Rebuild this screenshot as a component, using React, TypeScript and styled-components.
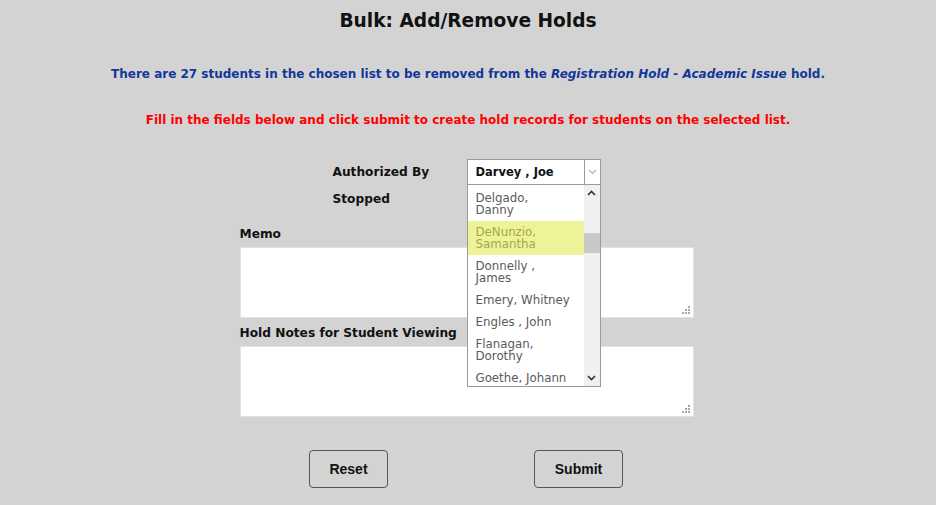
import styled, { createGlobalStyle } from 'styled-components';

const GlobalStyle = createGlobalStyle`
  html, body {
    margin: 0;
    padding: 0;
    background: #d3d3d3;
  }
  body {
    font-family: "DejaVu Sans", "Liberation Sans", sans-serif;
  }
`;

const staff = [
  { lines: ['Delgado,', 'Danny'] },
  { lines: ['DeNunzio,', 'Samantha'], active: true },
  { lines: ['Donnelly ,', 'James'] },
  { lines: ['Emery, Whitney'] },
  { lines: ['Engles , John'] },
  { lines: ['Flanagan,', 'Dorothy'] },
  { lines: ['Goethe, Johann'] },
];

function Grip() {
  return (
    <GripIcon width="9" height="9" viewBox="0 0 9 9">
      <rect x="6" y="0" width="2" height="2" />
      <rect x="3" y="3" width="2" height="2" />
      <rect x="6" y="3" width="2" height="2" />
      <rect x="0" y="6" width="2" height="2" />
      <rect x="3" y="6" width="2" height="2" />
      <rect x="6" y="6" width="2" height="2" />
    </GripIcon>
  );
}

export default function App() {
  return (
    <Page>
      <GlobalStyle />
      <Title>Bulk: Add/Remove Holds</Title>
      <Info>
        There are 27 students in the chosen list to be removed from the{' '}
        <em>Registration Hold - Academic Issue</em> hold.
      </Info>
      <Warning>
        Fill in the fields below and click submit to create hold records for
        students on the selected list.
      </Warning>

      <Form>
        <FieldRow>
          <Label>Authorized By</Label>
          <SelectWrap>
            <SelectBox>
              <SelectValue>Darvey , Joe</SelectValue>
              <SelectArrow>
                <svg width="9" height="6" viewBox="0 0 9 6">
                  <path d="M1 1l3.5 3.5L8 1" fill="none" stroke="#b0b0b0" strokeWidth="1.2" />
                </svg>
              </SelectArrow>
            </SelectBox>
            <Dropdown>
              <Options>
                {staff.map((s) => (
                  <Option key={s.lines.join(' ')} $active={!!s.active}>
                    {s.lines.map((l) => (
                      <span key={l}>{l}</span>
                    ))}
                  </Option>
                ))}
              </Options>
              <Scrollbar>
                <ScrollBtn>
                  <svg width="9" height="6" viewBox="0 0 9 6">
                    <path d="M1 5l3.5-3.5L8 5" fill="none" stroke="#333" strokeWidth="1.6" />
                  </svg>
                </ScrollBtn>
                <Track>
                  <Thumb />
                </Track>
                <ScrollBtn>
                  <svg width="9" height="6" viewBox="0 0 9 6">
                    <path d="M1 1l3.5 3.5L8 1" fill="none" stroke="#333" strokeWidth="1.6" />
                  </svg>
                </ScrollBtn>
              </Scrollbar>
            </Dropdown>
          </SelectWrap>
        </FieldRow>
        <FieldRow>
          <Label>Stopped</Label>
        </FieldRow>

        <Block $top={14}>
          <Label>Memo</Label>
          <AreaWrap>
            <TextArea />
            <Grip />
          </AreaWrap>
        </Block>
        <Block $top={7}>
          <Label>Hold Notes for Student Viewing</Label>
          <AreaWrap>
            <TextArea />
            <Grip />
          </AreaWrap>
        </Block>
      </Form>

      <Buttons>
        <Button $w={79}>Reset</Button>
        <Button $w={89}>Submit</Button>
      </Buttons>
    </Page>
  );
}

const Page = styled.div`
  width: 936px;
  height: 505px;
  display: flex;
  flex-direction: column;
  align-items: center;
  box-sizing: border-box;
  padding-top: 9px;
`;

const Title = styled.h1`
  margin: 0;
  font-size: 18.6px;
  line-height: 24px;
  font-weight: bold;
  color: #111;
`;

const Info = styled.p`
  margin: 33px 0 0;
  font-size: 12px;
  line-height: 16px;
  font-weight: bold;
  color: #12379a;
  em {
    font-style: italic;
  }
`;

const Warning = styled.p`
  margin: 30px 0 0;
  font-size: 12px;
  line-height: 16px;
  font-weight: bold;
  color: #ff0000;
`;

const Form = styled.div`
  width: 454px;
  margin: 30px 0 0 -3px;
  display: flex;
  flex-direction: column;
`;

const FieldRow = styled.div`
  display: flex;
  align-items: center;
  height: 27px;
  padding-left: 93px;
`;

const Label = styled.div`
  width: 134px;
  font-size: 12.2px;
  line-height: 16px;
  font-weight: bold;
  color: #111;
  white-space: nowrap;
`;

const SelectWrap = styled.div`
  position: relative;
  width: 134px;
  height: 26px;
`;

const SelectBox = styled.div`
  box-sizing: border-box;
  height: 26px;
  display: flex;
  background: #fff;
  border: 1px solid #9a9a9a;
`;

const SelectValue = styled.div`
  flex: 1;
  padding-left: 8px;
  font-size: 11.5px;
  font-weight: bold;
  line-height: 24px;
  color: #111;
`;

const SelectArrow = styled.div`
  width: 15px;
  border-left: 1px solid #9a9a9a;
  display: flex;
  align-items: center;
  justify-content: center;
`;

const Dropdown = styled.div`
  position: absolute;
  top: 26px;
  left: 0;
  width: 134px;
  height: 202px;
  box-sizing: border-box;
  display: flex;
  background: #fff;
  border: 1px solid #9a9a9a;
  border-top: none;
  z-index: 5;
  overflow: hidden;
`;

const Options = styled.div`
  flex: 1;
  display: flex;
  flex-direction: column;
  padding-top: 2px;
`;

const Option = styled.div<{ $active: boolean }>`
  display: flex;
  flex-direction: column;
  padding: 5px 8px 5px;
  font-size: 11.8px;
  line-height: 12px;
  white-space: nowrap;
  color: ${(p) => (p.$active ? '#a5a64c' : '#5a5a5a')};
  background: ${(p) => (p.$active ? '#eef39a' : 'transparent')};
`;

const Scrollbar = styled.div`
  width: 16px;
  background: #f0f0f0;
  display: flex;
  flex-direction: column;
`;

const ScrollBtn = styled.div`
  height: 16px;
  display: flex;
  align-items: center;
  justify-content: center;
`;

const Track = styled.div`
  flex: 1;
  padding-top: 32px;
`;

const Thumb = styled.div`
  height: 20px;
  background: #c8c8c8;
`;

const Block = styled.div<{ $top: number }>`
  display: flex;
  flex-direction: column;
  margin-top: ${(p) => p.$top}px;
  gap: 5px;
`;

const AreaWrap = styled.div`
  position: relative;
  width: 454px;
  height: 71px;
`;

const TextArea = styled.textarea`
  display: block;
  box-sizing: border-box;
  width: 100%;
  height: 100%;
  border: 1px solid #e2e2e2;
  background: #fff;
  margin: 0;
  resize: none;
  outline: none;
`;

const GripIcon = styled.svg`
  position: absolute;
  right: 3px;
  bottom: 3px;
  fill: #a8a8a8;
`;

const Buttons = styled.div`
  display: flex;
  gap: 146px;
  margin: 33px 0 0 -4px;
`;

const Button = styled.button<{ $w: number }>`
  width: ${(p) => p.$w}px;
  height: 38px;
  box-sizing: border-box;
  border: 1px solid #555;
  border-radius: 4px;
  background: #d3d3d3;
  font-family: "Liberation Sans", Arial, sans-serif;
  font-size: 14px;
  font-weight: bold;
  color: #111;
  cursor: pointer;
`;
